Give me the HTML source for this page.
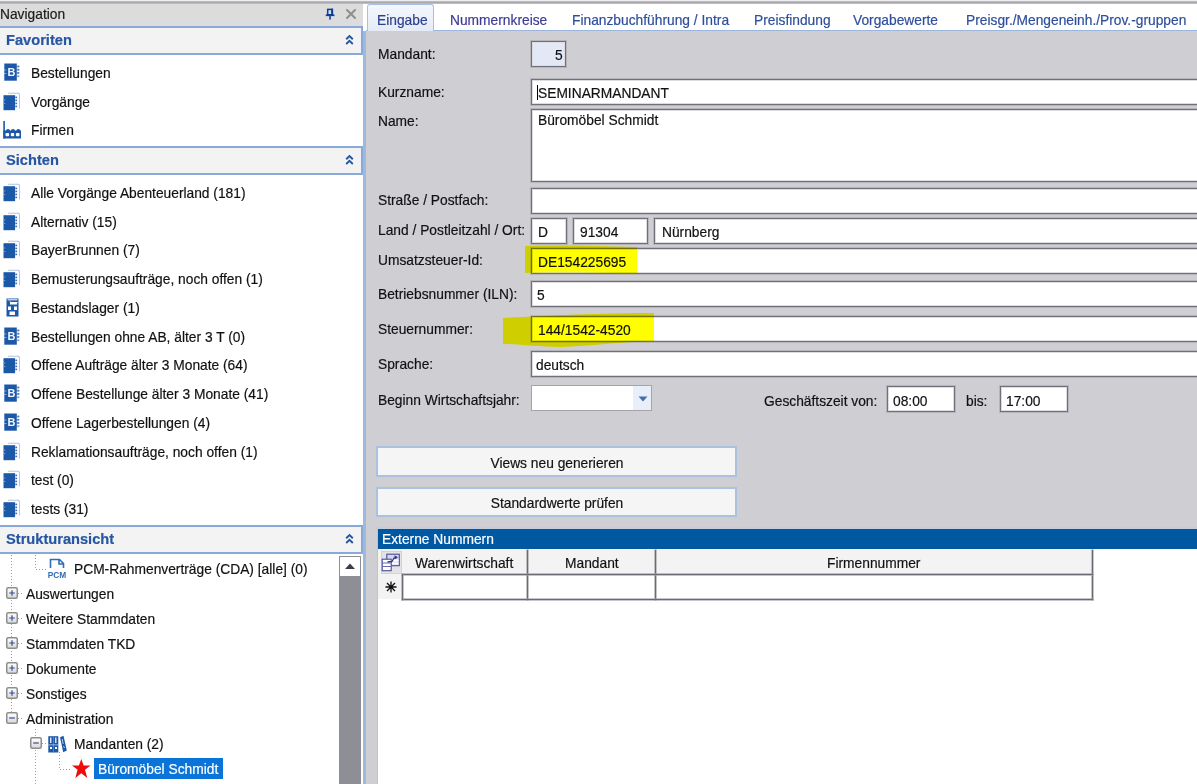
<!DOCTYPE html><html><head><meta charset="utf-8"><style>
html,body{margin:0;padding:0;width:1197px;height:784px;overflow:hidden;background:#fff}
.t{position:absolute;white-space:nowrap;line-height:20px;transform-origin:0 0;-webkit-text-stroke:0.2px currentColor;font-family:"Liberation Sans",sans-serif}
</style></head><body>
<div style="position:absolute;left:0px;top:0px;width:1197px;height:1px;background:#eeeef0"></div>
<div style="position:absolute;left:0px;top:1px;width:1197px;height:3px;background:linear-gradient(#c4c4c8,#a9a9ae 50%,#c4c4c8)"></div>
<div style="position:absolute;left:0px;top:4px;width:363px;height:780px;background:#ffffff"></div>
<div style="position:absolute;left:0px;top:4px;width:363px;height:22px;background:#dcdcdc"></div>
<div class="t" style="left:0.00px;top:3.80px;font-size:15px;color:#1b1b1b;font-weight:normal;transform:scaleX(0.9187);">Navigation</div>
<svg style="position:absolute;left:325px;top:8px" width="11" height="13" viewBox="0 0 11 13">
<rect x="2.7" y="1.4" width="4.6" height="5.4" fill="none" stroke="#0b3d9c" stroke-width="1.5"/>
<rect x="6.2" y="0.7" width="1.9" height="6.8" fill="#0b3d9c"/>
<rect x="0.8" y="6.4" width="8.6" height="1.7" fill="#0b3d9c"/>
<rect x="4.2" y="8" width="1.7" height="3.6" fill="#1d4ea8"/></svg>
<svg style="position:absolute;left:345px;top:8px" width="12" height="12" viewBox="0 0 12 12">
<path d="M2 2 L10 10 M10 2 L2 10" stroke="#8f8f8f" stroke-width="2.1" stroke-linecap="round"/></svg>
<div style="position:absolute;left:0px;top:26px;width:363px;height:29px;background:#f3f3f3;border-top:2px solid #88a9d9;border-bottom:2px solid #88a9d9;border-right:2px solid #88a9d9;box-sizing:border-box"></div>
<div class="t" style="left:6.00px;top:29.80px;font-size:15px;color:#2656a3;font-weight:bold;transform:scaleX(0.975);">Favoriten</div>
<svg style="position:absolute;left:345px;top:34px" width="9" height="12" viewBox="0 0 9 12">
<path d="M1.2 5.2 L4.5 2 L7.8 5.2 M1.2 10 L4.5 6.8 L7.8 10" fill="none" stroke="#2356a0" stroke-width="1.9"/></svg>
<svg style="position:absolute;left:4px;top:63px" width="17" height="19" viewBox="0 0 17 19">
<rect x="0.3" y="0.5" width="12.5" height="17.2" fill="#1c58a8"/>
<rect x="13" y="2.5" width="2.5" height="2" rx="0.8" fill="#5d86c0"/><rect x="13" y="5.8" width="2.5" height="2" rx="0.8" fill="#5d86c0"/><rect x="13" y="9" width="2.5" height="2" rx="0.8" fill="#5d86c0"/><rect x="13" y="12.3" width="2.5" height="2" rx="0.8" fill="#8aa8d4"/>
<text x="7.6" y="13" font-family="Liberation Sans" font-weight="bold" font-size="11" fill="#f2f5fb" text-anchor="middle">B</text>
<path d="M0 7h2.5M0 10.5h2.5" stroke="#9fbce4" stroke-width="0.8"/></svg>
<div class="t" style="left:31.00px;top:62.80px;font-size:15px;color:#111111;font-weight:normal;transform:scaleX(0.9187);">Bestellungen</div>
<svg style="position:absolute;left:3px;top:92px" width="18" height="19" viewBox="0 0 18 19">
<path d="M5 1.3 H15.5 L16.5 2.3 V16.5" fill="none" stroke="#b3c6e2" stroke-width="1.1"/>
<rect x="0.5" y="3.2" width="11.8" height="15" fill="#1c58a8"/>
<rect x="12.3" y="3.2" width="3.2" height="15" fill="#fff"/>
<rect x="12.3" y="4.6" width="1.8" height="1.6" fill="#3f6db2"/><rect x="12.3" y="7.6" width="1.8" height="1.6" fill="#3f6db2"/><rect x="12.3" y="10.6" width="1.8" height="1.6" fill="#3f6db2"/><rect x="12.3" y="13.6" width="1.8" height="1.6" fill="#3f6db2"/>
<path d="M0.5 8h1.8M0.5 11.5h1.8" stroke="#8fb0dc" stroke-width="0.8"/></svg>
<div class="t" style="left:31.00px;top:91.80px;font-size:15px;color:#111111;font-weight:normal;transform:scaleX(0.9187);">Vorgänge</div>
<svg style="position:absolute;left:3px;top:120px" width="20" height="20" viewBox="0 0 20 20">
<rect x="0.3" y="1" width="1.6" height="17.5" fill="#1c58a8"/>
<rect x="0.3" y="10.5" width="17.7" height="8" fill="#1c58a8"/>
<circle cx="5" cy="11" r="2" fill="#1c58a8"/><circle cx="10" cy="11" r="2" fill="#1c58a8"/><circle cx="15.3" cy="11" r="2" fill="#1c58a8"/>
<rect x="2.5" y="13" width="3.6" height="3.2" rx="1" fill="#fff"/><rect x="7.8" y="13" width="3.4" height="3.2" rx="1" fill="#fff"/><rect x="12.9" y="13" width="3.6" height="3.2" rx="1" fill="#fff"/></svg>
<div class="t" style="left:31.00px;top:119.80px;font-size:15px;color:#111111;font-weight:normal;transform:scaleX(0.9187);">Firmen</div>
<div style="position:absolute;left:0px;top:146px;width:363px;height:29px;background:#f3f3f3;border-top:2px solid #88a9d9;border-bottom:2px solid #88a9d9;border-right:2px solid #88a9d9;box-sizing:border-box"></div>
<div class="t" style="left:6.00px;top:149.80px;font-size:15px;color:#2656a3;font-weight:bold;transform:scaleX(0.975);">Sichten</div>
<svg style="position:absolute;left:345px;top:154px" width="9" height="12" viewBox="0 0 9 12">
<path d="M1.2 5.2 L4.5 2 L7.8 5.2 M1.2 10 L4.5 6.8 L7.8 10" fill="none" stroke="#2356a0" stroke-width="1.9"/></svg>
<svg style="position:absolute;left:3px;top:183px" width="18" height="19" viewBox="0 0 18 19">
<path d="M5 1.3 H15.5 L16.5 2.3 V16.5" fill="none" stroke="#b3c6e2" stroke-width="1.1"/>
<rect x="0.5" y="3.2" width="11.8" height="15" fill="#1c58a8"/>
<rect x="12.3" y="3.2" width="3.2" height="15" fill="#fff"/>
<rect x="12.3" y="4.6" width="1.8" height="1.6" fill="#3f6db2"/><rect x="12.3" y="7.6" width="1.8" height="1.6" fill="#3f6db2"/><rect x="12.3" y="10.6" width="1.8" height="1.6" fill="#3f6db2"/><rect x="12.3" y="13.6" width="1.8" height="1.6" fill="#3f6db2"/>
<path d="M0.5 8h1.8M0.5 11.5h1.8" stroke="#8fb0dc" stroke-width="0.8"/></svg>
<div class="t" style="left:31.00px;top:182.80px;font-size:15px;color:#111111;font-weight:normal;transform:scaleX(0.9187);">Alle Vorgänge Abenteuerland (181)</div>
<svg style="position:absolute;left:3px;top:212px" width="18" height="19" viewBox="0 0 18 19">
<path d="M5 1.3 H15.5 L16.5 2.3 V16.5" fill="none" stroke="#b3c6e2" stroke-width="1.1"/>
<rect x="0.5" y="3.2" width="11.8" height="15" fill="#1c58a8"/>
<rect x="12.3" y="3.2" width="3.2" height="15" fill="#fff"/>
<rect x="12.3" y="4.6" width="1.8" height="1.6" fill="#3f6db2"/><rect x="12.3" y="7.6" width="1.8" height="1.6" fill="#3f6db2"/><rect x="12.3" y="10.6" width="1.8" height="1.6" fill="#3f6db2"/><rect x="12.3" y="13.6" width="1.8" height="1.6" fill="#3f6db2"/>
<path d="M0.5 8h1.8M0.5 11.5h1.8" stroke="#8fb0dc" stroke-width="0.8"/></svg>
<div class="t" style="left:31.00px;top:211.80px;font-size:15px;color:#111111;font-weight:normal;transform:scaleX(0.9187);">Alternativ (15)</div>
<svg style="position:absolute;left:3px;top:240px" width="18" height="19" viewBox="0 0 18 19">
<path d="M5 1.3 H15.5 L16.5 2.3 V16.5" fill="none" stroke="#b3c6e2" stroke-width="1.1"/>
<rect x="0.5" y="3.2" width="11.8" height="15" fill="#1c58a8"/>
<rect x="12.3" y="3.2" width="3.2" height="15" fill="#fff"/>
<rect x="12.3" y="4.6" width="1.8" height="1.6" fill="#3f6db2"/><rect x="12.3" y="7.6" width="1.8" height="1.6" fill="#3f6db2"/><rect x="12.3" y="10.6" width="1.8" height="1.6" fill="#3f6db2"/><rect x="12.3" y="13.6" width="1.8" height="1.6" fill="#3f6db2"/>
<path d="M0.5 8h1.8M0.5 11.5h1.8" stroke="#8fb0dc" stroke-width="0.8"/></svg>
<div class="t" style="left:31.00px;top:239.80px;font-size:15px;color:#111111;font-weight:normal;transform:scaleX(0.9187);">BayerBrunnen (7)</div>
<svg style="position:absolute;left:3px;top:269px" width="18" height="19" viewBox="0 0 18 19">
<path d="M5 1.3 H15.5 L16.5 2.3 V16.5" fill="none" stroke="#b3c6e2" stroke-width="1.1"/>
<rect x="0.5" y="3.2" width="11.8" height="15" fill="#1c58a8"/>
<rect x="12.3" y="3.2" width="3.2" height="15" fill="#fff"/>
<rect x="12.3" y="4.6" width="1.8" height="1.6" fill="#3f6db2"/><rect x="12.3" y="7.6" width="1.8" height="1.6" fill="#3f6db2"/><rect x="12.3" y="10.6" width="1.8" height="1.6" fill="#3f6db2"/><rect x="12.3" y="13.6" width="1.8" height="1.6" fill="#3f6db2"/>
<path d="M0.5 8h1.8M0.5 11.5h1.8" stroke="#8fb0dc" stroke-width="0.8"/></svg>
<div class="t" style="left:31.00px;top:268.80px;font-size:15px;color:#111111;font-weight:normal;transform:scaleX(0.9187);">Bemusterungsaufträge, noch offen (1)</div>
<svg style="position:absolute;left:6px;top:298px" width="14" height="19" viewBox="0 0 14 19">
<rect x="0.5" y="0.5" width="12" height="18" fill="#1c58a8"/>
<rect x="1.5" y="1" width="10" height="1.5" fill="#b9cbe6"/>
<path d="M3 2.5 L5 5 H11.5 V4 H5" fill="#fff"/>
<rect x="4" y="4" width="7" height="2.5" fill="#fff"/>
<rect x="2" y="8.5" width="3" height="3.5" fill="#fff"/><rect x="8" y="8.5" width="3" height="3.5" fill="#fff"/>
<rect x="3.5" y="13.5" width="5.5" height="3.5" fill="#fff"/></svg>
<div class="t" style="left:31.00px;top:297.80px;font-size:15px;color:#111111;font-weight:normal;transform:scaleX(0.9187);">Bestandslager (1)</div>
<svg style="position:absolute;left:4px;top:327px" width="17" height="19" viewBox="0 0 17 19">
<rect x="0.3" y="0.5" width="12.5" height="17.2" fill="#1c58a8"/>
<rect x="13" y="2.5" width="2.5" height="2" rx="0.8" fill="#5d86c0"/><rect x="13" y="5.8" width="2.5" height="2" rx="0.8" fill="#5d86c0"/><rect x="13" y="9" width="2.5" height="2" rx="0.8" fill="#5d86c0"/><rect x="13" y="12.3" width="2.5" height="2" rx="0.8" fill="#8aa8d4"/>
<text x="7.6" y="13" font-family="Liberation Sans" font-weight="bold" font-size="11" fill="#f2f5fb" text-anchor="middle">B</text>
<path d="M0 7h2.5M0 10.5h2.5" stroke="#9fbce4" stroke-width="0.8"/></svg>
<div class="t" style="left:31.00px;top:326.80px;font-size:15px;color:#111111;font-weight:normal;transform:scaleX(0.9187);">Bestellungen ohne AB, älter 3 T (0)</div>
<svg style="position:absolute;left:3px;top:355px" width="18" height="19" viewBox="0 0 18 19">
<path d="M5 1.3 H15.5 L16.5 2.3 V16.5" fill="none" stroke="#b3c6e2" stroke-width="1.1"/>
<rect x="0.5" y="3.2" width="11.8" height="15" fill="#1c58a8"/>
<rect x="12.3" y="3.2" width="3.2" height="15" fill="#fff"/>
<rect x="12.3" y="4.6" width="1.8" height="1.6" fill="#3f6db2"/><rect x="12.3" y="7.6" width="1.8" height="1.6" fill="#3f6db2"/><rect x="12.3" y="10.6" width="1.8" height="1.6" fill="#3f6db2"/><rect x="12.3" y="13.6" width="1.8" height="1.6" fill="#3f6db2"/>
<path d="M0.5 8h1.8M0.5 11.5h1.8" stroke="#8fb0dc" stroke-width="0.8"/></svg>
<div class="t" style="left:31.00px;top:354.80px;font-size:15px;color:#111111;font-weight:normal;transform:scaleX(0.9187);">Offene Aufträge älter 3 Monate (64)</div>
<svg style="position:absolute;left:4px;top:384px" width="17" height="19" viewBox="0 0 17 19">
<rect x="0.3" y="0.5" width="12.5" height="17.2" fill="#1c58a8"/>
<rect x="13" y="2.5" width="2.5" height="2" rx="0.8" fill="#5d86c0"/><rect x="13" y="5.8" width="2.5" height="2" rx="0.8" fill="#5d86c0"/><rect x="13" y="9" width="2.5" height="2" rx="0.8" fill="#5d86c0"/><rect x="13" y="12.3" width="2.5" height="2" rx="0.8" fill="#8aa8d4"/>
<text x="7.6" y="13" font-family="Liberation Sans" font-weight="bold" font-size="11" fill="#f2f5fb" text-anchor="middle">B</text>
<path d="M0 7h2.5M0 10.5h2.5" stroke="#9fbce4" stroke-width="0.8"/></svg>
<div class="t" style="left:31.00px;top:383.80px;font-size:15px;color:#111111;font-weight:normal;transform:scaleX(0.9187);">Offene Bestellunge älter 3 Monate (41)</div>
<svg style="position:absolute;left:4px;top:413px" width="17" height="19" viewBox="0 0 17 19">
<rect x="0.3" y="0.5" width="12.5" height="17.2" fill="#1c58a8"/>
<rect x="13" y="2.5" width="2.5" height="2" rx="0.8" fill="#5d86c0"/><rect x="13" y="5.8" width="2.5" height="2" rx="0.8" fill="#5d86c0"/><rect x="13" y="9" width="2.5" height="2" rx="0.8" fill="#5d86c0"/><rect x="13" y="12.3" width="2.5" height="2" rx="0.8" fill="#8aa8d4"/>
<text x="7.6" y="13" font-family="Liberation Sans" font-weight="bold" font-size="11" fill="#f2f5fb" text-anchor="middle">B</text>
<path d="M0 7h2.5M0 10.5h2.5" stroke="#9fbce4" stroke-width="0.8"/></svg>
<div class="t" style="left:31.00px;top:412.80px;font-size:15px;color:#111111;font-weight:normal;transform:scaleX(0.9187);">Offene Lagerbestellungen (4)</div>
<svg style="position:absolute;left:3px;top:442px" width="18" height="19" viewBox="0 0 18 19">
<path d="M5 1.3 H15.5 L16.5 2.3 V16.5" fill="none" stroke="#b3c6e2" stroke-width="1.1"/>
<rect x="0.5" y="3.2" width="11.8" height="15" fill="#1c58a8"/>
<rect x="12.3" y="3.2" width="3.2" height="15" fill="#fff"/>
<rect x="12.3" y="4.6" width="1.8" height="1.6" fill="#3f6db2"/><rect x="12.3" y="7.6" width="1.8" height="1.6" fill="#3f6db2"/><rect x="12.3" y="10.6" width="1.8" height="1.6" fill="#3f6db2"/><rect x="12.3" y="13.6" width="1.8" height="1.6" fill="#3f6db2"/>
<path d="M0.5 8h1.8M0.5 11.5h1.8" stroke="#8fb0dc" stroke-width="0.8"/></svg>
<div class="t" style="left:31.00px;top:441.80px;font-size:15px;color:#111111;font-weight:normal;transform:scaleX(0.9187);">Reklamationsaufträge, noch offen (1)</div>
<svg style="position:absolute;left:3px;top:470px" width="18" height="19" viewBox="0 0 18 19">
<path d="M5 1.3 H15.5 L16.5 2.3 V16.5" fill="none" stroke="#b3c6e2" stroke-width="1.1"/>
<rect x="0.5" y="3.2" width="11.8" height="15" fill="#1c58a8"/>
<rect x="12.3" y="3.2" width="3.2" height="15" fill="#fff"/>
<rect x="12.3" y="4.6" width="1.8" height="1.6" fill="#3f6db2"/><rect x="12.3" y="7.6" width="1.8" height="1.6" fill="#3f6db2"/><rect x="12.3" y="10.6" width="1.8" height="1.6" fill="#3f6db2"/><rect x="12.3" y="13.6" width="1.8" height="1.6" fill="#3f6db2"/>
<path d="M0.5 8h1.8M0.5 11.5h1.8" stroke="#8fb0dc" stroke-width="0.8"/></svg>
<div class="t" style="left:31.00px;top:469.80px;font-size:15px;color:#111111;font-weight:normal;transform:scaleX(0.9187);">test (0)</div>
<svg style="position:absolute;left:3px;top:499px" width="18" height="19" viewBox="0 0 18 19">
<path d="M5 1.3 H15.5 L16.5 2.3 V16.5" fill="none" stroke="#b3c6e2" stroke-width="1.1"/>
<rect x="0.5" y="3.2" width="11.8" height="15" fill="#1c58a8"/>
<rect x="12.3" y="3.2" width="3.2" height="15" fill="#fff"/>
<rect x="12.3" y="4.6" width="1.8" height="1.6" fill="#3f6db2"/><rect x="12.3" y="7.6" width="1.8" height="1.6" fill="#3f6db2"/><rect x="12.3" y="10.6" width="1.8" height="1.6" fill="#3f6db2"/><rect x="12.3" y="13.6" width="1.8" height="1.6" fill="#3f6db2"/>
<path d="M0.5 8h1.8M0.5 11.5h1.8" stroke="#8fb0dc" stroke-width="0.8"/></svg>
<div class="t" style="left:31.00px;top:498.80px;font-size:15px;color:#111111;font-weight:normal;transform:scaleX(0.9187);">tests (31)</div>
<div style="position:absolute;left:0px;top:525px;width:363px;height:29px;background:#f3f3f3;border-top:2px solid #88a9d9;border-bottom:2px solid #88a9d9;border-right:2px solid #88a9d9;box-sizing:border-box"></div>
<div class="t" style="left:6.00px;top:528.80px;font-size:15px;color:#2656a3;font-weight:bold;transform:scaleX(0.975);">Strukturansicht</div>
<svg style="position:absolute;left:345px;top:533px" width="9" height="12" viewBox="0 0 9 12">
<path d="M1.2 5.2 L4.5 2 L7.8 5.2 M1.2 10 L4.5 6.8 L7.8 10" fill="none" stroke="#2356a0" stroke-width="1.9"/></svg>
<svg width="0" height="0" style="position:absolute"><defs><linearGradient id="eg" x1="0" y1="0" x2="0" y2="1"><stop offset="0" stop-color="#ffffff"/><stop offset="1" stop-color="#d8d8d8"/></linearGradient></defs></svg>
<div style="position:absolute;left:11px;top:555px;width:1px;height:157px;background:repeating-linear-gradient(#9c9c9c 0 1px,transparent 1px 3px)"></div>
<div style="position:absolute;left:35px;top:555px;width:1px;height:15px;background:repeating-linear-gradient(#9c9c9c 0 1px,transparent 1px 3px)"></div>
<div style="position:absolute;left:36px;top:569px;width:11px;height:1px;background:repeating-linear-gradient(90deg,#9c9c9c 0 1px,transparent 1px 3px)"></div>
<svg style="position:absolute;left:47px;top:558px" width="20" height="20" viewBox="0 0 20 20">
<path d="M3.5 10 V1.5 H12.5 L16.5 5.5 V10 M12 1.5 V6 H16.5" fill="none" stroke="#2f6db5" stroke-width="1.6"/>
<text x="10" y="19.5" font-family="Liberation Sans" font-weight="bold" font-size="9.5" fill="#2f6db5" text-anchor="middle" textLength="18.5" lengthAdjust="spacingAndGlyphs">PCM</text></svg>
<div class="t" style="left:73.50px;top:558.80px;font-size:15px;color:#111111;font-weight:normal;transform:scaleX(0.9187);">PCM-Rahmenverträge (CDA) [alle] (0)</div>
<div style="position:absolute;left:6px;top:587px;width:12px;height:12px;background:#fff"></div>
<svg style="position:absolute;left:6px;top:587px" width="12" height="12" viewBox="0 0 12 12">
<rect x="0.75" y="0.75" width="10.5" height="10.5" rx="1.5" fill="url(#eg)" stroke="#8d8d8d" stroke-width="1.5"/>
<path d="M3.2 6 H8.8 M6 3.2 V8.8" stroke="#3a4a9a" stroke-width="1.2"/></svg>
<div style="position:absolute;left:18px;top:593px;width:6px;height:1px;background:repeating-linear-gradient(90deg,#9c9c9c 0 1px,transparent 1px 3px)"></div>
<div class="t" style="left:25.50px;top:583.80px;font-size:15px;color:#111111;font-weight:normal;transform:scaleX(0.9187);">Auswertungen</div>
<div style="position:absolute;left:6px;top:612px;width:12px;height:12px;background:#fff"></div>
<svg style="position:absolute;left:6px;top:612px" width="12" height="12" viewBox="0 0 12 12">
<rect x="0.75" y="0.75" width="10.5" height="10.5" rx="1.5" fill="url(#eg)" stroke="#8d8d8d" stroke-width="1.5"/>
<path d="M3.2 6 H8.8 M6 3.2 V8.8" stroke="#3a4a9a" stroke-width="1.2"/></svg>
<div style="position:absolute;left:18px;top:618px;width:6px;height:1px;background:repeating-linear-gradient(90deg,#9c9c9c 0 1px,transparent 1px 3px)"></div>
<div class="t" style="left:25.50px;top:608.80px;font-size:15px;color:#111111;font-weight:normal;transform:scaleX(0.9187);">Weitere Stammdaten</div>
<div style="position:absolute;left:6px;top:637px;width:12px;height:12px;background:#fff"></div>
<svg style="position:absolute;left:6px;top:637px" width="12" height="12" viewBox="0 0 12 12">
<rect x="0.75" y="0.75" width="10.5" height="10.5" rx="1.5" fill="url(#eg)" stroke="#8d8d8d" stroke-width="1.5"/>
<path d="M3.2 6 H8.8 M6 3.2 V8.8" stroke="#3a4a9a" stroke-width="1.2"/></svg>
<div style="position:absolute;left:18px;top:643px;width:6px;height:1px;background:repeating-linear-gradient(90deg,#9c9c9c 0 1px,transparent 1px 3px)"></div>
<div class="t" style="left:25.50px;top:633.80px;font-size:15px;color:#111111;font-weight:normal;transform:scaleX(0.9187);">Stammdaten TKD</div>
<div style="position:absolute;left:6px;top:662px;width:12px;height:12px;background:#fff"></div>
<svg style="position:absolute;left:6px;top:662px" width="12" height="12" viewBox="0 0 12 12">
<rect x="0.75" y="0.75" width="10.5" height="10.5" rx="1.5" fill="url(#eg)" stroke="#8d8d8d" stroke-width="1.5"/>
<path d="M3.2 6 H8.8 M6 3.2 V8.8" stroke="#3a4a9a" stroke-width="1.2"/></svg>
<div style="position:absolute;left:18px;top:668px;width:6px;height:1px;background:repeating-linear-gradient(90deg,#9c9c9c 0 1px,transparent 1px 3px)"></div>
<div class="t" style="left:25.50px;top:658.80px;font-size:15px;color:#111111;font-weight:normal;transform:scaleX(0.9187);">Dokumente</div>
<div style="position:absolute;left:6px;top:687px;width:12px;height:12px;background:#fff"></div>
<svg style="position:absolute;left:6px;top:687px" width="12" height="12" viewBox="0 0 12 12">
<rect x="0.75" y="0.75" width="10.5" height="10.5" rx="1.5" fill="url(#eg)" stroke="#8d8d8d" stroke-width="1.5"/>
<path d="M3.2 6 H8.8 M6 3.2 V8.8" stroke="#3a4a9a" stroke-width="1.2"/></svg>
<div style="position:absolute;left:18px;top:693px;width:6px;height:1px;background:repeating-linear-gradient(90deg,#9c9c9c 0 1px,transparent 1px 3px)"></div>
<div class="t" style="left:25.50px;top:683.80px;font-size:15px;color:#111111;font-weight:normal;transform:scaleX(0.9187);">Sonstiges</div>
<div style="position:absolute;left:6px;top:712px;width:12px;height:12px;background:#fff"></div>
<svg style="position:absolute;left:6px;top:712px" width="12" height="12" viewBox="0 0 12 12">
<rect x="0.75" y="0.75" width="10.5" height="10.5" rx="1.5" fill="url(#eg)" stroke="#8d8d8d" stroke-width="1.5"/>
<path d="M3.2 6 H8.8" stroke="#3a4a9a" stroke-width="1.2"/></svg>
<div style="position:absolute;left:18px;top:718px;width:6px;height:1px;background:repeating-linear-gradient(90deg,#9c9c9c 0 1px,transparent 1px 3px)"></div>
<div class="t" style="left:25.50px;top:708.80px;font-size:15px;color:#111111;font-weight:normal;transform:scaleX(0.9187);">Administration</div>
<div style="position:absolute;left:35px;top:729px;width:1px;height:55px;background:repeating-linear-gradient(#9c9c9c 0 1px,transparent 1px 3px)"></div>
<div style="position:absolute;left:30px;top:737px;width:12px;height:12px;background:#fff"></div>
<svg style="position:absolute;left:30px;top:737px" width="12" height="12" viewBox="0 0 12 12">
<rect x="0.75" y="0.75" width="10.5" height="10.5" rx="1.5" fill="url(#eg)" stroke="#8d8d8d" stroke-width="1.5"/>
<path d="M3.2 6 H8.8" stroke="#3a4a9a" stroke-width="1.2"/></svg>
<div style="position:absolute;left:42px;top:743px;width:5px;height:1px;background:repeating-linear-gradient(90deg,#9c9c9c 0 1px,transparent 1px 3px)"></div>
<svg style="position:absolute;left:48px;top:735px" width="19" height="19" viewBox="0 0 19 19">
<rect x="0.3" y="1.2" width="10" height="16.3" fill="#1c58a8"/>
<rect x="5" y="1.2" width="0.7" height="16.3" fill="#6d93c8"/>
<rect x="2" y="2.5" width="1" height="5.5" fill="#d9e4f3"/><rect x="3.3" y="2.5" width="0.7" height="5.5" fill="#9fbbe0"/>
<rect x="7" y="2.5" width="1" height="5.5" fill="#d9e4f3"/><rect x="8.3" y="2.5" width="0.7" height="5.5" fill="#9fbbe0"/>
<rect x="0.3" y="9.5" width="10" height="0.8" fill="#bcd0ea"/>
<rect x="2" y="12" width="2" height="2" fill="#fff"/><rect x="7" y="12" width="2" height="2" fill="#fff"/>
<path d="M12 2.2 L15.5 0.8 L18.8 15.6 L15.2 17.2 Z" fill="#1c58a8"/>
<path d="M14.2 4 L15.2 9 M15.5 11 L16.5 13" stroke="#c6d6ee" stroke-width="0.9"/></svg>
<div class="t" style="left:74.00px;top:733.80px;font-size:15px;color:#111111;font-weight:normal;transform:scaleX(0.9187);">Mandanten (2)</div>
<div style="position:absolute;left:59px;top:752px;width:1px;height:17px;background:repeating-linear-gradient(#9c9c9c 0 1px,transparent 1px 3px)"></div>
<div style="position:absolute;left:60px;top:769px;width:11px;height:1px;background:repeating-linear-gradient(90deg,#9c9c9c 0 1px,transparent 1px 3px)"></div>
<svg style="position:absolute;left:71px;top:758px" width="20" height="21" viewBox="0 0 20 21">
<path d="M10.3 1 L12.7 7.6 L19.5 7.6 L14 11.8 L16.3 20 L10.3 15.2 L4.3 20 L6.6 11.8 L1 7.6 L7.9 7.6 Z" fill="#ee0d0d"/></svg>
<div style="position:absolute;left:94px;top:758px;width:129px;height:21px;background:#0a74d8"></div>
<div class="t" style="left:97.50px;top:758.80px;font-size:15px;color:#ffffff;font-weight:normal;transform:scaleX(0.9187);">Büromöbel Schmidt</div>
<div style="position:absolute;left:339px;top:556px;width:22px;height:228px;background:#8e8e96"></div>
<div style="position:absolute;left:339px;top:556px;width:22px;height:21px;background:#fff;border:1px solid #8e8e96;box-sizing:border-box"></div>
<svg style="position:absolute;left:344px;top:562px" width="12" height="8" viewBox="0 0 12 8"><path d="M1 7 L6 1.5 L11 7 Z" fill="#3d3d48"/></svg>
<div style="position:absolute;left:363px;top:4px;width:3px;height:780px;background:#9db9de"></div>
<div style="position:absolute;left:363px;top:4px;width:3px;height:27px;background:#ffffff"></div>
<div style="position:absolute;left:366px;top:4px;width:831px;height:27px;background:#ffffff"></div>
<div style="position:absolute;left:366px;top:30px;width:831px;height:1px;background:#9ab6dc"></div>
<div style="position:absolute;left:366px;top:31px;width:831px;height:753px;background:#cfced3"></div>
<div style="position:absolute;left:367px;top:4px;width:67px;height:27px;background:linear-gradient(#f4f7fc,#e4ebf7);border:1px solid #a6c0e4;border-bottom:none;border-radius:3px 3px 0 0;box-sizing:border-box"></div>
<div class="t" style="left:376.70px;top:9.80px;font-size:15px;color:#2c3f8f;font-weight:normal;transform:scaleX(0.9187);">Eingabe</div>
<div class="t" style="left:450.00px;top:9.80px;font-size:15px;color:#3b3b96;font-weight:normal;transform:scaleX(0.9187);">Nummernkreise</div>
<div class="t" style="left:572.40px;top:9.80px;font-size:15px;color:#2e4e9a;font-weight:normal;transform:scaleX(0.9187);">Finanzbuchführung / Intra</div>
<div class="t" style="left:754.00px;top:9.80px;font-size:15px;color:#2e4e9a;font-weight:normal;transform:scaleX(0.9187);">Preisfindung</div>
<div class="t" style="left:853.00px;top:9.80px;font-size:15px;color:#2e4e9a;font-weight:normal;transform:scaleX(0.9187);">Vorgabewerte</div>
<div class="t" style="left:965.70px;top:9.80px;font-size:15px;color:#2e4e9a;font-weight:normal;transform:scaleX(0.9187);">Preisgr./Mengeneinh./Prov.-gruppen</div>
<div class="t" style="left:378.00px;top:43.80px;font-size:15px;color:#111111;font-weight:normal;transform:scaleX(0.9187);">Mandant:</div>
<div class="t" style="left:378.00px;top:81.80px;font-size:15px;color:#111111;font-weight:normal;transform:scaleX(0.9187);">Kurzname:</div>
<div class="t" style="left:378.00px;top:110.80px;font-size:15px;color:#111111;font-weight:normal;transform:scaleX(0.9187);">Name:</div>
<div class="t" style="left:378.00px;top:189.80px;font-size:15px;color:#111111;font-weight:normal;transform:scaleX(0.9187);">Straße / Postfach:</div>
<div class="t" style="left:378.00px;top:219.80px;font-size:15px;color:#111111;font-weight:normal;transform:scaleX(0.9187);">Land / Postleitzahl / Ort:</div>
<div class="t" style="left:378.00px;top:249.80px;font-size:15px;color:#111111;font-weight:normal;transform:scaleX(0.9187);">Umsatzsteuer-Id:</div>
<div class="t" style="left:378.00px;top:283.80px;font-size:15px;color:#111111;font-weight:normal;transform:scaleX(0.9187);">Betriebsnummer (ILN):</div>
<div class="t" style="left:378.00px;top:318.80px;font-size:15px;color:#111111;font-weight:normal;transform:scaleX(0.9187);">Steuernummer:</div>
<div class="t" style="left:378.00px;top:353.80px;font-size:15px;color:#111111;font-weight:normal;transform:scaleX(0.9187);">Sprache:</div>
<div class="t" style="left:378.00px;top:389.80px;font-size:15px;color:#111111;font-weight:normal;transform:scaleX(0.9187);">Beginn Wirtschaftsjahr:</div>
<div style="position:absolute;left:531px;top:41px;width:35px;height:26px;background:#e2e8f5;border:1px solid #716f79;box-shadow:0 0 0 1px #b6b5bc, inset 0 0 0 1px #dcdce0;box-sizing:border-box"></div>
<div class="t" style="left:555.00px;top:44.80px;font-size:15px;color:#111111;font-weight:normal;transform:scaleX(0.9187);">5</div>
<div style="position:absolute;left:531px;top:79px;width:700px;height:26px;background:#ffffff;border:1px solid #716f79;box-shadow:0 0 0 1px #b6b5bc, inset 0 0 0 1px #dcdce0;box-sizing:border-box"></div>
<div style="position:absolute;left:537px;top:85px;width:1px;height:15px;background:#000"></div>
<div class="t" style="left:538.00px;top:82.80px;font-size:15px;color:#111111;font-weight:normal;transform:scaleX(0.9187);">SEMINARMANDANT</div>
<div style="position:absolute;left:531px;top:109px;width:700px;height:73px;background:#ffffff;border:1px solid #716f79;box-shadow:0 0 0 1px #b6b5bc, inset 0 0 0 1px #dcdce0;box-sizing:border-box"></div>
<div class="t" style="left:538.00px;top:109.80px;font-size:15px;color:#111111;font-weight:normal;transform:scaleX(0.9187);">Büromöbel Schmidt</div>
<div style="position:absolute;left:531px;top:188px;width:700px;height:26px;background:#ffffff;border:1px solid #716f79;box-shadow:0 0 0 1px #b6b5bc, inset 0 0 0 1px #dcdce0;box-sizing:border-box"></div>
<div style="position:absolute;left:531px;top:218px;width:36px;height:26px;background:#ffffff;border:1px solid #716f79;box-shadow:0 0 0 1px #b6b5bc, inset 0 0 0 1px #dcdce0;box-sizing:border-box"></div>
<div class="t" style="left:538.00px;top:221.80px;font-size:15px;color:#111111;font-weight:normal;transform:scaleX(0.9187);">D</div>
<div style="position:absolute;left:573px;top:218px;width:75px;height:26px;background:#ffffff;border:1px solid #716f79;box-shadow:0 0 0 1px #b6b5bc, inset 0 0 0 1px #dcdce0;box-sizing:border-box"></div>
<div class="t" style="left:579.70px;top:221.80px;font-size:15px;color:#111111;font-weight:normal;transform:scaleX(0.9187);">91304</div>
<div style="position:absolute;left:654px;top:218px;width:600px;height:26px;background:#ffffff;border:1px solid #716f79;box-shadow:0 0 0 1px #b6b5bc, inset 0 0 0 1px #dcdce0;box-sizing:border-box"></div>
<div class="t" style="left:661.60px;top:221.80px;font-size:15px;color:#111111;font-weight:normal;transform:scaleX(0.9187);">Nürnberg</div>
<div style="position:absolute;left:531px;top:248px;width:700px;height:26px;background:#ffffff;border:1px solid #716f79;box-shadow:0 0 0 1px #b6b5bc, inset 0 0 0 1px #dcdce0;box-sizing:border-box"></div>
<div class="t" style="left:538.00px;top:251.80px;font-size:15px;color:#111111;font-weight:normal;transform:scaleX(0.9187);">DE154225695</div>
<div style="position:absolute;left:531px;top:281px;width:700px;height:26px;background:#ffffff;border:1px solid #716f79;box-shadow:0 0 0 1px #b6b5bc, inset 0 0 0 1px #dcdce0;box-sizing:border-box"></div>
<div class="t" style="left:536.60px;top:284.80px;font-size:15px;color:#111111;font-weight:normal;transform:scaleX(0.9187);">5</div>
<div style="position:absolute;left:531px;top:316px;width:700px;height:26px;background:#ffffff;border:1px solid #716f79;box-shadow:0 0 0 1px #b6b5bc, inset 0 0 0 1px #dcdce0;box-sizing:border-box"></div>
<div class="t" style="left:538.00px;top:319.80px;font-size:15px;color:#111111;font-weight:normal;transform:scaleX(0.9187);">144/1542-4520</div>
<div style="position:absolute;left:531px;top:351px;width:700px;height:26px;background:#ffffff;border:1px solid #716f79;box-shadow:0 0 0 1px #b6b5bc, inset 0 0 0 1px #dcdce0;box-sizing:border-box"></div>
<div class="t" style="left:536.00px;top:354.80px;font-size:15px;color:#111111;font-weight:normal;transform:scaleX(0.9187);">deutsch</div>
<div style="position:absolute;left:531px;top:385px;width:121px;height:26px;background:#fff;border:1px solid #a4a4aa;box-sizing:border-box"></div>
<div style="position:absolute;left:633px;top:386px;width:18px;height:24px;background:#e8eff9"></div>
<svg style="position:absolute;left:638px;top:396px" width="10" height="6" viewBox="0 0 10 6"><path d="M0.5 0.5 H9.5 L5 5.5 Z" fill="#4a6fa8"/></svg>
<div class="t" style="left:763.80px;top:390.80px;font-size:15px;color:#111111;font-weight:normal;transform:scaleX(0.9187);">Geschäftszeit von:</div>
<div style="position:absolute;left:887px;top:386px;width:68px;height:26px;background:#ffffff;border:1px solid #716f79;box-shadow:0 0 0 1px #b6b5bc, inset 0 0 0 1px #dcdce0;box-sizing:border-box"></div>
<div class="t" style="left:893.40px;top:390.80px;font-size:15px;color:#111111;font-weight:normal;transform:scaleX(0.9187);">08:00</div>
<div class="t" style="left:966.00px;top:390.80px;font-size:15px;color:#111111;font-weight:normal;transform:scaleX(0.9187);">bis:</div>
<div style="position:absolute;left:1000px;top:386px;width:68px;height:26px;background:#ffffff;border:1px solid #716f79;box-shadow:0 0 0 1px #b6b5bc, inset 0 0 0 1px #dcdce0;box-sizing:border-box"></div>
<div class="t" style="left:1006.00px;top:390.80px;font-size:15px;color:#111111;font-weight:normal;transform:scaleX(0.9187);">17:00</div>
<div style="position:absolute;left:376px;top:446px;width:361px;height:31px;background:#f5f5f5;border:2px solid #aac2e0;box-sizing:border-box"></div>
<div class="t" style="left:256.50px;width:600px;text-align:center;transform-origin:50% 0;top:452.80px;font-size:15px;color:#111111;transform:scaleX(0.9187)">Views neu generieren</div>
<div style="position:absolute;left:376px;top:487px;width:361px;height:30px;background:#f5f5f5;border:2px solid #aac2e0;box-sizing:border-box"></div>
<div class="t" style="left:256.50px;width:600px;text-align:center;transform-origin:50% 0;top:492.80px;font-size:15px;color:#111111;transform:scaleX(0.9187)">Standardwerte prüfen</div>
<div style="position:absolute;left:377px;top:527px;width:820px;height:257px;background:#ffffff;border-left:1px solid #b4c6de;border-top:2px solid #c2cedd;box-sizing:border-box"></div>
<div style="position:absolute;left:378px;top:529px;width:819px;height:20px;background:#0058a3"></div>
<div class="t" style="left:381.50px;top:528.80px;font-size:15px;color:#ffffff;font-weight:normal;transform:scaleX(0.9187);">Externe Nummern</div>
<div style="position:absolute;left:378px;top:549px;width:714px;height:25px;background:#f3f3f3"></div>
<div style="position:absolute;left:378px;top:574px;width:24px;height:25px;background:#f3f3f3"></div>
<div style="position:absolute;left:527px;top:550px;width:1px;height:50px;background:#6a6a72;box-shadow:0 0 0 0.6px #a0a0a8"></div>
<div style="position:absolute;left:655px;top:550px;width:1px;height:50px;background:#6a6a72;box-shadow:0 0 0 0.6px #a0a0a8"></div>
<div style="position:absolute;left:1092px;top:550px;width:1px;height:50px;background:#6a6a72;box-shadow:0 0 0 0.6px #a0a0a8"></div>
<div style="position:absolute;left:402px;top:574px;width:691px;height:1px;background:#6a6a72;box-shadow:0 0 0 0.6px #a0a0a8"></div>
<div style="position:absolute;left:402px;top:599px;width:691px;height:1px;background:#6a6a72;box-shadow:0 0 0 0.6px #a0a0a8"></div>
<div style="position:absolute;left:402px;top:574px;width:1px;height:26px;background:#6a6a72;box-shadow:0 0 0 0.6px #a0a0a8"></div>
<svg style="position:absolute;left:381px;top:551px" width="21" height="23" viewBox="0 0 21 23">
<rect x="0.5" y="0.5" width="20" height="22" fill="#e3e3e5" stroke="#d2d2d5"/>
<rect x="5.8" y="3.2" width="12.5" height="11.5" fill="#d6d6f3" stroke="#4b4b98" stroke-width="1.1"/>
<rect x="6.5" y="8.5" width="11" height="2" fill="#ffffff"/><rect x="6.5" y="11.5" width="11" height="2" fill="#ffffff"/>
<rect x="1.2" y="8.2" width="9" height="11.5" fill="#ffffff" stroke="#4b4b98" stroke-width="1.1"/>
<path d="M1.2 12h9M1.2 15.5h9" stroke="#6a6ab0" stroke-width="1"/>
<path d="M6.5 11 L11 10.5 L13 7 L15.5 6.5" fill="none" stroke="#353580" stroke-width="1.3"/>
<path d="M13.5 4.2 L17 6.2 L13.8 8.2 Z" fill="#353580"/></svg>
<div class="t" style="left:414.50px;top:552.80px;font-size:15px;color:#111111;font-weight:normal;transform:scaleX(0.9187);">Warenwirtschaft</div>
<div class="t" style="left:564.70px;top:552.80px;font-size:15px;color:#111111;font-weight:normal;transform:scaleX(0.9187);">Mandant</div>
<div class="t" style="left:827.00px;top:552.80px;font-size:15px;color:#111111;font-weight:normal;transform:scaleX(0.9187);">Firmennummer</div>
<svg style="position:absolute;left:385px;top:581px" width="12" height="12" viewBox="0 0 12 12"><path d="M6 0.5V11.5M0.5 6H11.5M2 2L10 10M10 2L2 10" stroke="#111" stroke-width="1.3"/></svg>
<svg style="position:absolute;left:0;top:0;mix-blend-mode:multiply" width="1197" height="784">
<path d="M525 246 C560 245 600 246 637 247 L637 273 C600 273 560 272 525 273 Z" fill="#ffff00"/>
<path d="M503 318 C540 316 600 313 654 313 L654 341 C620 342 590 346 560 347 C540 347 520 344 503 344 Z" fill="#ffff00"/>
</svg>
</body></html>
